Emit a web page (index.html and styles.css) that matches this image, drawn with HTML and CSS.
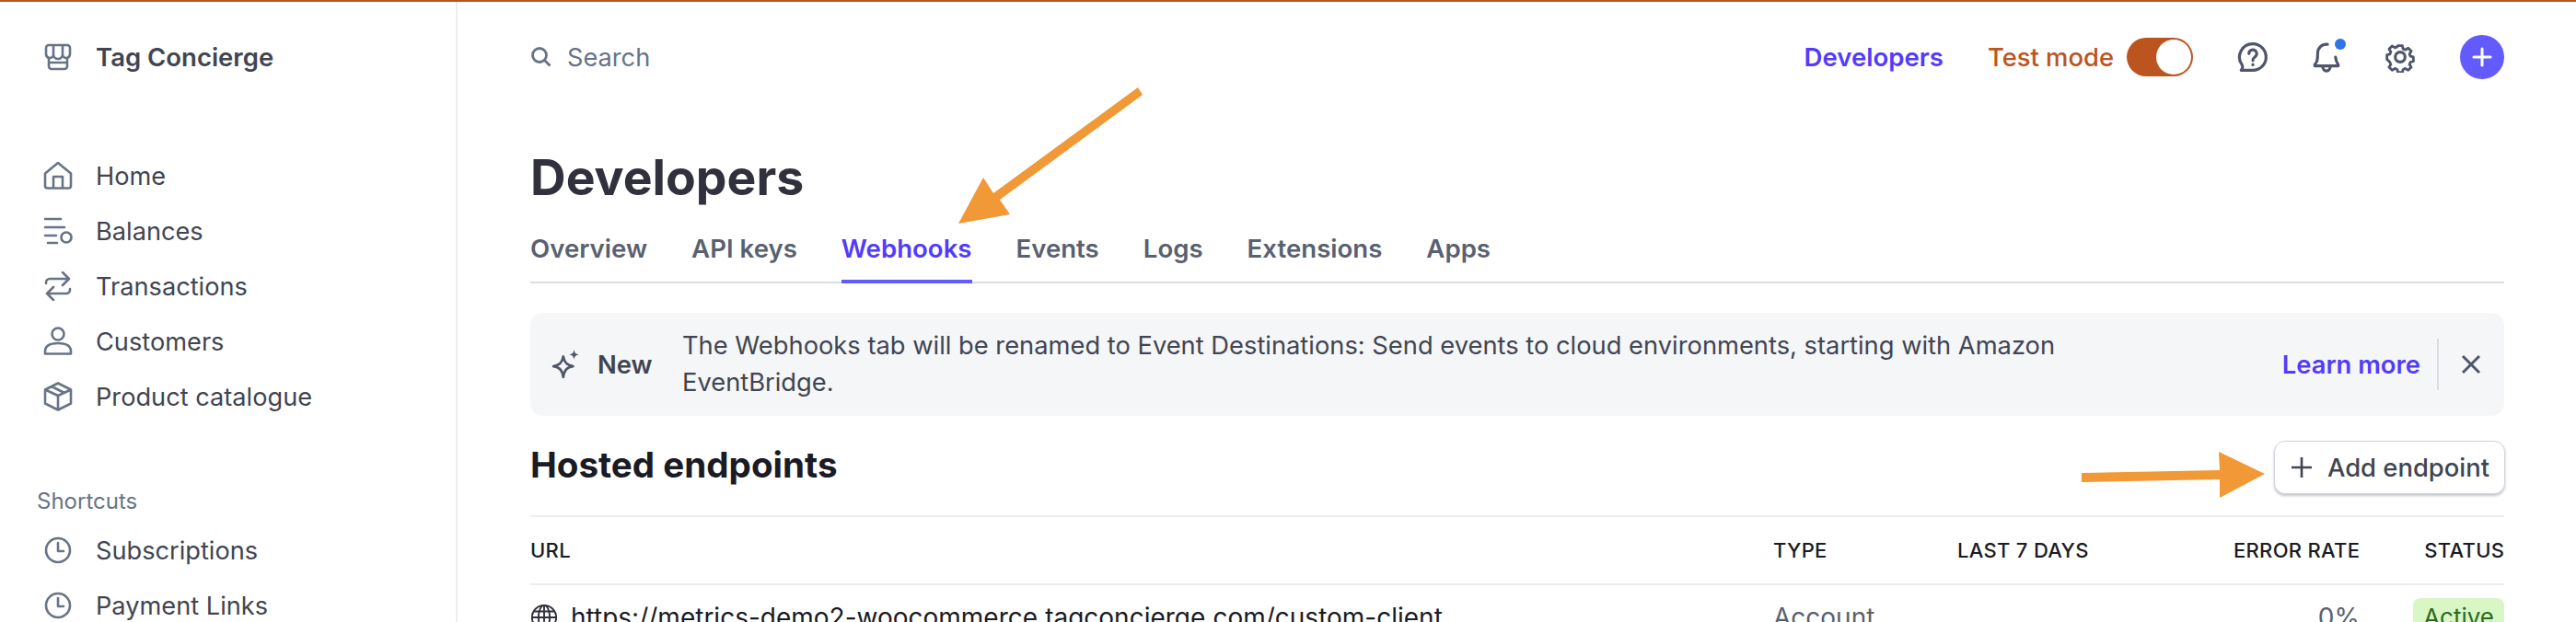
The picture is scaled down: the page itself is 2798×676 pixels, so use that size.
FILE: index.html
```html
<!DOCTYPE html>
<html lang="en">
<head>
    <meta charset="UTF-8">
    <title>Developers - Webhooks</title>
    <link rel="stylesheet" href="styles.css">
</head>
<body>
    <div class="app">
        <aside class="sidebar">
            <div class="account">
                <svg class="icon" viewBox="0 0 32 32"><path d="M6 3h20a3 3 0 0 1 3 3l0 7a5 5 0 0 1-3 4v9a3 3 0 0 1-3 3H9a3 3 0 0 1-3-3v-9a5 5 0 0 1-3-4V6a3 3 0 0 1 3-3zM11 3v10a4 4 0 0 1-8 0M21 3v10a5 5 0 0 1-10 0M21 13a4 4 0 0 0 8 0M6 22h20"/></svg>
                <span>Tag Concierge</span>
            </div>
            <nav class="nav">
                <a class="nav-item"><svg class="icon" viewBox="0 0 32 32"><path d="M2 13.500 16 2l14 11.500V27a2.500 2.500 0 0 1-2.500 2.500h-23A2.500 2.500 0 0 1 2 27zM11 29.500V17h10v12.500"/></svg>Home</a>
                <a class="nav-item"><svg class="icon" viewBox="0 0 32 32"><path d="M2 3h17M2 12h21M2 21h12M5 29h10"/><circle cx="25" cy="23" r="5.500"/></svg>Balances</a>
                <a class="nav-item"><svg class="icon" viewBox="0 0 32 32"><path d="M3 13v-1a4 4 0 0 1 4-4h21M21 1l7 7-7 7M29 19v1a4 4 0 0 1-4 4H4M11 17l-7 7 7 7"/></svg>Transactions</a>
                <a class="nav-item"><svg class="icon" viewBox="0 0 32 32"><circle cx="16" cy="8" r="6.500"/><path d="M2 27c0-6 5-9 14-9s14 3 14 9v2.500H2z"/></svg>Customers</a>
                <a class="nav-item"><svg class="icon" viewBox="0 0 32 32"><path d="M16 1.500 30 8.500v15L16 30.500 2 23.500v-15zM2 8.500 16 15l14-6.500M16 15v15M9 5l14 7"/></svg>Product catalogue</a>
            </nav>
            <div class="nav-title">Shortcuts</div>
            <nav class="nav">
                <a class="nav-item"><svg class="icon" viewBox="0 0 32 32"><circle cx="16" cy="16" r="13"/><path d="M16 8v9h6"/></svg>Subscriptions</a>
                <a class="nav-item"><svg class="icon" viewBox="0 0 32 32"><circle cx="16" cy="16" r="13"/><path d="M16 8v9h6"/></svg>Payment Links</a>
            </nav>
        </aside>

        <main class="main">
            <header class="topbar">
                <div class="search">
                    <svg class="search-icon" viewBox="0 0 24 24"><circle cx="10" cy="10" r="7.500"/><path d="m15.500 15.500 6 6"/></svg>
                    <span>Search</span>
                </div>
                <div class="top-actions">
                    <a class="top-link">Developers</a>
                    <div class="test-mode">
                        <span>Test mode</span>
                        <span class="toggle"><span class="toggle-knob"></span></span>
                    </div>
                    <svg class="top-icon" viewBox="0 0 32 32"><path d="M16 2.500a13.500 13.500 0 0 1 0 27H4c1.500-1.500 1.800-3.500 1-5.500A13.500 13.500 0 0 1 16 2.500z"/><path d="M12 12.500a4 4 0 1 1 6 3.500c-1.500 1-2 1.500-2 3.500"/><path d="M16 23.500v.5"/></svg>
                    <div class="bell">
                        <svg class="top-icon" viewBox="0 0 32 32"><path d="M17 3h-1a9 9 0 0 0-9 9c0 8-1 9-3 12v1h24v-1c-1.500-2.500-2.500-4-2.800-8M12 25c0 7 8 7 8 0"/></svg>
                        <span class="bell-dot"></span>
                    </div>
                    <svg class="top-icon" viewBox="0 0 32 32"><path d="M13.500 3h5l.8 3.700 2.600 1.100 3.200-2 3.500 3.500-2 3.200 1.100 2.600 3.300.8v5l-3.300.8-1.100 2.600 2 3.200-3.500 3.500-3.200-2-2.600 1.100-.8 3.300h-5l-.8-3.300-2.600-1.100-3.200 2-3.500-3.500 2-3.200-1.100-2.600L1 18.500v-5l3.300-.8 1.100-2.600-2-3.200 3.500-3.500 3.200 2 2.600-1.100z" transform="translate(1.600 1.600) scale(.9)"/><circle cx="16" cy="16" r="5"/></svg>
                    <button class="create-btn"><svg viewBox="0 0 24 24"><path d="M12 3v18M3 12h18"/></svg></button>
                </div>
            </header>

            <h1 class="page-title">Developers</h1>

            <div class="tabs">
                <a class="tab">Overview</a>
                <a class="tab">API keys</a>
                <a class="tab active">Webhooks</a>
                <a class="tab">Events</a>
                <a class="tab">Logs</a>
                <a class="tab">Extensions</a>
                <a class="tab">Apps</a>
            </div>

            <div class="banner">
                <div class="banner-tag">
                    <svg viewBox="0 0 32 32"><path d="M13 8c1 6 3.500 9 10 10-6.500 1-9 4-10 11-1-7-3.500-10-10-11 6.500-1 9-4 10-10z"/><path class="spark" d="M24 1c.5 3 1.500 4.500 5 5-3.500.5-4.500 2-5 5-.5-3-1.500-4.500-5-5 3.500-.5 4.500-2 5-5z"/></svg>
                    <span>New</span>
                </div>
                <p class="banner-text">The Webhooks tab will be renamed to Event Destinations: Send events to cloud environments, starting with Amazon EventBridge.</p>
                <a class="banner-link">Learn more</a>
                <button class="banner-close"><svg viewBox="0 0 28 28"><path d="M5 5l18 18M23 5 5 23"/></svg></button>
            </div>

            <div class="section-head">
                <h2 class="section-title">Hosted endpoints</h2>
                <button class="add-btn"><svg viewBox="0 0 24 24"><path d="M12 1v22M1 12h22"/></svg>Add endpoint</button>
            </div>

            <div class="table">
                <div class="row head">
                    <div>URL</div>
                    <div>TYPE</div>
                    <div>LAST 7 DAYS</div>
                    <div class="right">ERROR RATE</div>
                    <div class="right">STATUS</div>
                </div>
                <div class="row">
                    <div class="url">
                        <svg viewBox="0 0 32 32"><circle cx="16" cy="16" r="14"/><ellipse cx="16" cy="16" rx="6.500" ry="14"/><path d="M16 2v28M2 16h28M4.500 9h23M4.500 23h23"/></svg>
                        <span>https://metrics-demo2-woocommerce.tagconcierge.com/custom-client</span>
                    </div>
                    <div class="muted">Account</div>
                    <div></div>
                    <div class="right muted">0%</div>
                    <div class="right"><span class="badge">Active</span></div>
                </div>
            </div>
        </main>
    </div>

    <!-- annotation arrows -->
    <svg class="arrows" viewBox="0 0 2798 676">
        <polygon points="1236,95 1079,210 1068,193 1041,243 1097,233 1086,217 1241,103"/>
        <polygon points="2261,514 2411,511 2410,491 2460,515 2411,541 2411,521 2261,524"/>
    </svg>
</body>
</html>
```

FILE: styles.css
```css
* {
    margin: 0;
    padding: 0;
    box-sizing: border-box;
}

html, body {
    height: 100%;
    overflow: hidden;
}

body {
    font-family: 'Inter', sans-serif;
    font-size: 28px;
    color: #3c4257;
    background-color: #ffffff;
    border-top: 2px solid #bc5420;
}

.app {
    display: flex;
    height: 100%;
}

.sidebar {
    width: 497px;
    flex-shrink: 0;
    border-right: 2px solid #ebeef1;
    padding: 42px 40px 0 40px;
}

.icon {
    width: 32px;
    height: 32px;
    flex-shrink: 0;
    fill: none;
    stroke: #687385;
    stroke-width: 2.6;
    stroke-linejoin: round;
    stroke-linecap: round;
}

.account {
    display: flex;
    align-items: center;
    gap: 25px;
    padding-left: 7px;
    height: 36px;
    font-size: 27.500px;
    font-weight: 600;
    color: #414552;
    margin-bottom: 81px;
}

.nav {
    display: flex;
    flex-direction: column;
}

.nav-item {
    display: flex;
    align-items: center;
    gap: 25px;
    height: 60px;
    padding-left: 7px;
    font-size: 27.200px;
    color: #414552;
}

.nav-title {
    margin-top: 69px;
    margin-bottom: 8px;
    font-size: 24px;
    line-height: 30px;
    color: #687385;
}

.main {
    flex: 1;
    padding: 0 78px 0 79px;
    min-width: 0;
}

.topbar {
    display: flex;
    align-items: center;
    justify-content: space-between;
    height: 120px;
}

.search {
    display: flex;
    align-items: center;
    gap: 16px;
    font-size: 27.200px;
    color: #687385;
}

.search-icon {
    width: 24px;
    height: 24px;
    fill: none;
    stroke: #687385;
    stroke-width: 2.8;
}

.top-actions {
    display: flex;
    align-items: center;
}

.top-link {
    color: #533afd;
    font-size: 27.600px;
    font-weight: 600;
    margin-right: 48px;
}

.test-mode {
    display: flex;
    align-items: center;
    gap: 14px;
    color: #bc5420;
    font-size: 27.400px;
    font-weight: 500;
    margin-right: 48px;
}

.toggle {
    display: flex;
    justify-content: flex-end;
    width: 72px;
    height: 42px;
    border-radius: 21px;
    background-color: #bc5420;
    padding: 2px;
}

.toggle-knob {
    width: 38px;
    height: 38px;
    border-radius: 50%;
    background-color: #ffffff;
}

.top-icon {
    display: block;
    width: 34px;
    height: 34px;
    fill: none;
    stroke: #50566b;
    stroke-width: 3;
    stroke-linecap: round;
    stroke-linejoin: round;
}

.bell {
    position: relative;
    margin: 0 46px;
}

.bell-dot {
    position: absolute;
    top: -3px;
    right: -4px;
    width: 12px;
    height: 12px;
    border-radius: 50%;
    background-color: #2f74e8;
}

.create-btn {
    display: flex;
    align-items: center;
    justify-content: center;
    width: 48px;
    height: 48px;
    margin-left: 48px;
    border: none;
    border-radius: 50%;
    background-color: #635bff;
}

.create-btn svg {
    width: 24px;
    height: 24px;
    fill: none;
    stroke: #ffffff;
    stroke-width: 3;
    stroke-linecap: round;
}

.page-title {
    font-size: 53.500px;
    line-height: 68px;
    font-weight: 700;
    color: #30313d;
    margin-top: 37px;
}

.tabs {
    display: flex;
    gap: 48px;
    margin-top: 26px;
    border-bottom: 2px solid #d8dee4;
}

.tab {
    font-size: 27.600px;
    font-weight: 600;
    line-height: 34px;
    color: #596171;
    padding-bottom: 17px;
    margin-bottom: -2px;
    border-bottom: 4px solid transparent;
}

.tab.active {
    color: #533afd;
    border-bottom-color: #635bff;
}

.banner {
    display: flex;
    align-items: center;
    height: 112px;
    margin-top: 32px;
    padding: 0 22px;
    background-color: #f5f6f8;
    border-radius: 14px;
}

.banner-tag {
    display: flex;
    align-items: center;
    gap: 17px;
    width: 143px;
    flex-shrink: 0;
    font-size: 27.400px;
    font-weight: 600;
    color: #414552;
}

.banner-tag svg {
    width: 34px;
    height: 34px;
    flex-shrink: 0;
    fill: none;
    stroke: #50566b;
    stroke-width: 2.6;
    stroke-linejoin: round;
}

.banner-tag .spark {
    fill: #50566b;
    stroke: none;
}

.banner-text {
    width: 1540px;
    font-size: 27.300px;
    line-height: 40px;
    color: #414552;
}

.banner-link {
    margin-left: auto;
    margin-right: 18px;
    color: #533afd;
    font-size: 27.400px;
    font-weight: 600;
}

.banner-close {
    display: flex;
    align-items: center;
    height: 56px;
    padding-left: 21px;
    background: none;
    border: none;
    border-left: 2px solid #d8dee4;
}

.banner-close svg {
    width: 28px;
    height: 28px;
    fill: none;
    stroke: #50566b;
    stroke-width: 3;
}

.section-head {
    display: flex;
    align-items: center;
    justify-content: space-between;
    height: 104px;
    margin-top: 4px;
}

.section-title {
    font-size: 38.600px;
    font-weight: 700;
    color: #1a1b25;
    margin-bottom: 6px;
}

.add-btn {
    display: flex;
    align-items: center;
    gap: 16px;
    height: 58px;
    margin-right: -1px;
    padding: 0 16px 0 17px;
    background-color: #ffffff;
    border: 1px solid #d0d4da;
    border-radius: 12px;
    box-shadow: 0 2px 3px rgba(60, 66, 87, 0.3);
    font-family: inherit;
    font-size: 27.400px;
    font-weight: 500;
    color: #414552;
}

.add-btn svg {
    width: 24px;
    height: 24px;
    fill: none;
    stroke: #414552;
    stroke-width: 2.6;
}

.table {
    border-top: 2px solid #ebeef1;
}

.row {
    display: grid;
    grid-template-columns: 1350px 200px 300px 1fr 157px;
    align-items: center;
}

.row.head {
    height: 74px;
    border-bottom: 2px solid #ebeef1;
    font-size: 22px;
    font-weight: 500;
    letter-spacing: 0.3px;
    color: #1a1b25;
}

.row > div:not(.url) {
    white-space: nowrap;
}

.row:not(.head) {
    height: 70px;
    font-size: 28px;
}

.right {
    text-align: right;
}

.muted {
    color: #596171;
}

.url {
    display: flex;
    align-items: center;
    gap: 14px;
    color: #1a1b25;
}

.url svg {
    width: 30px;
    height: 30px;
    fill: none;
    stroke: #30313d;
    stroke-width: 2;
}

.badge {
    display: inline-block;
    padding: 0 11px;
    font-size: 26px;
    line-height: 42px;
    border-radius: 8px;
    color: #2d6a1f;
    background-color: #d9f7c5;
}

.arrows {
    position: absolute;
    left: 0;
    top: 0;
    width: 2798px;
    height: 676px;
    fill: #f19837;
    pointer-events: none;
}
```
